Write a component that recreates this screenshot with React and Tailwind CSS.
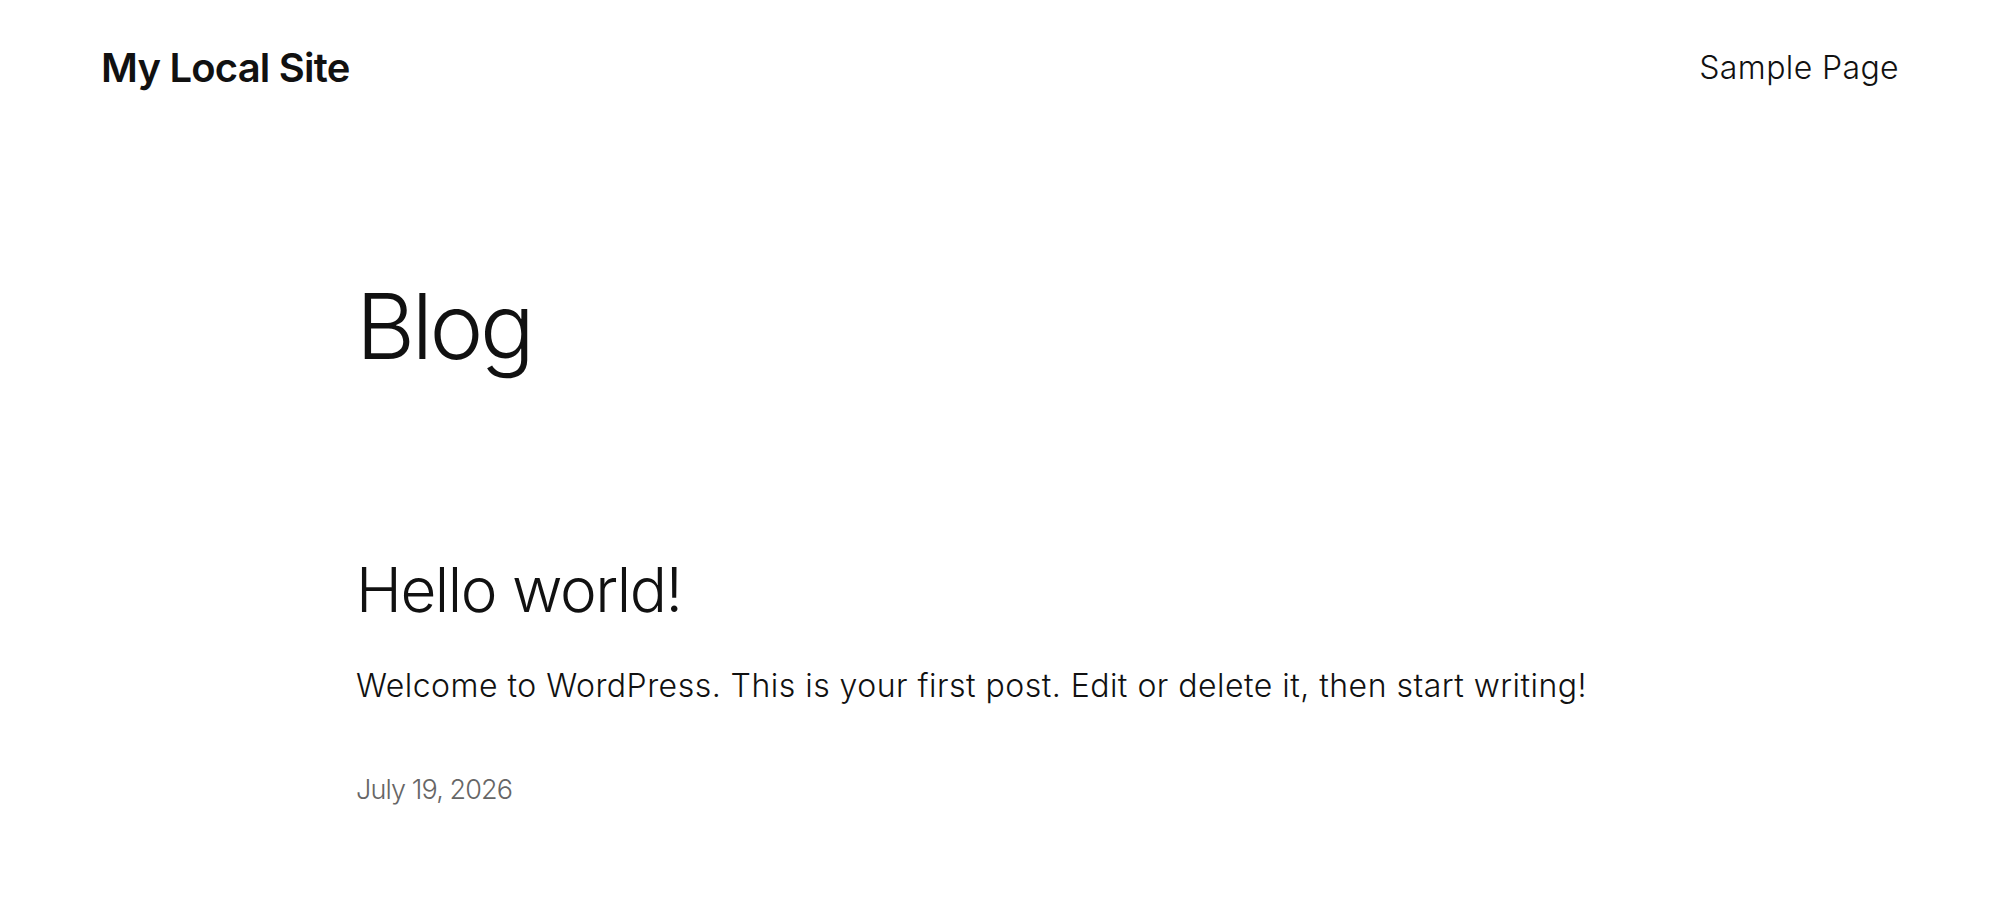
export default function App() {
  return (
    <div className="min-h-[900px] bg-white text-[#111111] font-['Inter',sans-serif]">
      <header className="flex items-center justify-between h-[136px] px-[101px]">
        <a className="text-[40px] leading-none font-semibold tracking-[-0.02em]">My Local Site</a>
        <nav>
          <a className="text-[32px] leading-none font-light tracking-[0.012em]">Sample Page</a>
        </nav>
      </header>

      <main className="w-[1288px] mx-auto">
        <h1 className="mt-[145px] text-[91px] leading-none font-light tracking-[-0.038em]">Blog</h1>

        <article className="mt-[187px]">
          <h2 className="text-[62px] leading-none font-light tracking-[-0.024em]">Hello world!</h2>
          <p className="mt-[49px] text-[32px] leading-none font-light tracking-[0.015em]">
            Welcome to WordPress. This is your first post. Edit or delete it, then start writing!
          </p>
          <time className="block mt-[74px] text-[27px] leading-none font-light tracking-[-0.033em] text-[#666666]">
            July 19, 2026
          </time>
        </article>
      </main>
    </div>
  );
}
